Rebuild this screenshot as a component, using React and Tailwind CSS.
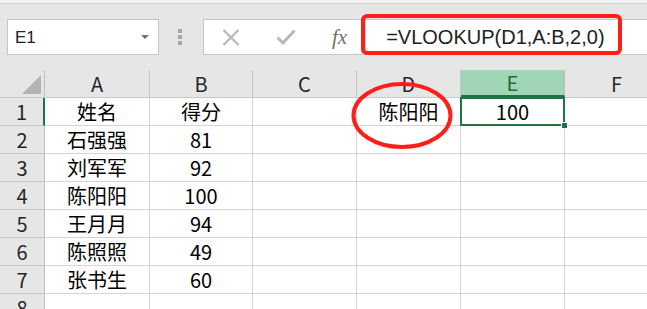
import React from 'react';

const cols = [
  { key: 'A', w: 'w-[105px]' },
  { key: 'B', w: 'w-[103px]' },
  { key: 'C', w: 'w-[104px]' },
  { key: 'D', w: 'w-[104px]' },
  { key: 'E', w: 'w-[104px]' },
  { key: 'F', w: 'w-[104px]' },
];

const rows = [
  { A: '姓名', B: '得分', D: '陈阳阳', E: '100' },
  { A: '石强强', B: '81' },
  { A: '刘军军', B: '92' },
  { A: '陈阳阳', B: '100' },
  { A: '王月月', B: '94' },
  { A: '陈照照', B: '49' },
  { A: '张书生', B: '60' },
  {},
];

const cellFont = { fontFamily: '"Noto Sans CJK SC", "Liberation Sans", sans-serif' };
const latin = { fontFamily: '"Liberation Sans", sans-serif' };

export default function App() {
  return (
    <div className="relative w-[647px] h-[309px] overflow-hidden bg-white" style={cellFont}>
      {/* top strip */}
      <div className="h-[4px] bg-[#f2f2f2] border-b border-[#d6d6d6]" />

      {/* name box + formula bar */}
      <div className="h-[66px] bg-[#e6e6e6] flex items-start pt-[15px]">
        <div className="ml-[7px] w-[152px] h-[36px] bg-white border border-[#c6c6c6] flex items-center pl-[7px] pr-[9px]">
          <span className="flex-1 text-[17px] leading-none text-[#222]" style={latin}>E1</span>
          <span className="w-0 h-0 border-l-[4px] border-r-[4px] border-t-[4px] border-l-transparent border-r-transparent border-t-[#707070]" />
        </div>

        <div className="ml-[19px] mt-[10px] flex flex-col gap-[2px]">
          <span className="w-[4px] h-[4px] bg-[#a8a8a8]" />
          <span className="w-[4px] h-[4px] bg-[#a8a8a8]" />
          <span className="w-[4px] h-[4px] bg-[#a8a8a8]" />
        </div>

        <div className="ml-[21px] flex-1 h-[36px] bg-white border border-r-0 border-[#c6c6c6] flex items-center">
          <svg className="ml-[18px]" width="18" height="17" viewBox="0 0 18 17">
            <path d="M1.5 1 L16.5 16 M16.5 1 L1.5 16" stroke="#b8b8b8" strokeWidth="2.2" fill="none" />
          </svg>
          <svg className="ml-[36px]" width="20" height="16" viewBox="0 0 20 16">
            <path d="M1.5 8.5 L7 14 L18.5 1.5" stroke="#b8b8b8" strokeWidth="3" fill="none" />
          </svg>
          <span
            className="ml-[36px] text-[21px] italic leading-none text-[#707070]"
            style={{ fontFamily: '"Liberation Serif", serif' }}
          >
            fx
          </span>
          <div className="ml-[14px] w-[5px] h-full bg-[#ececec] border-l border-r border-[#cfcfcf]" />
          <span className="ml-[20px] text-[20px] leading-none text-[#222]" style={latin}>
            =VLOOKUP(D1,A:B,2,0)
          </span>
        </div>
      </div>

      {/* column headers */}
      <div className="flex h-[28px] bg-[#e6e6e6] border-b border-[#c8c8c8]">
        <div className="w-[45px] shrink-0 border-r border-[#c0c0c0] flex items-end justify-end pr-[3px] pb-[3px]">
          <div className="w-[19px] h-[19px] bg-[#b4b4b4] [clip-path:polygon(100%_0,100%_100%,0_100%)]" />
        </div>
        {cols.map((c) => (
          <div
            key={c.key}
            className={`${c.w} shrink-0 flex items-center justify-center text-[20px] leading-none border-r ${
              c.key === 'E'
                ? 'bg-[#a0d6b5] text-[#1e6b41] border-[#bcbcbc] border-b-2 border-b-[#217346]'
                : 'text-[#262626] border-[#c8c8c8]'
            }`}
          >
            {c.key}
          </div>
        ))}
      </div>

      {/* rows */}
      {rows.map((r, i) => (
        <div key={i} className="flex h-[28px]">
          <div
            className={`w-[45px] shrink-0 flex items-center justify-center bg-[#e6e6e6] text-[20px] leading-none text-[#262626] border-b border-[#c8c8c8] ${
              i === 0 ? 'border-r-2 border-r-[#217346]' : 'border-r border-r-[#c0c0c0]'
            }`}
          >
            {i + 1}
          </div>
          {cols.map((c) => (
            <div
              key={c.key}
              className={`${c.w} shrink-0 relative flex items-center justify-center text-[20px] leading-none text-black border-r border-b border-[#d4d4d4]`}
            >
              {r[c.key]}
              {i === 0 && c.key === 'E' && (
                <>
                  <div className="absolute z-10 -left-[1px] -top-[1px] -right-[1px] -bottom-[1px] border-2 border-[#217346]" />
                  <div className="absolute z-10 -right-[4px] -bottom-[4px] w-[7px] h-[7px] bg-[#217346] border border-white" />
                </>
              )}
            </div>
          ))}
        </div>
      ))}

      {/* red annotations */}
      <div className="absolute z-20 left-[361px] top-[14px] w-[261px] h-[41px] border-4 border-[#ff1f1a] rounded-[6px]" />
      <svg className="absolute z-20 left-[351px] top-[81px]" width="104" height="70" viewBox="0 0 104 70">
        <ellipse cx="51" cy="34.5" rx="48.5" ry="31.5" fill="none" stroke="#ff1f1a" strokeWidth="4" />
      </svg>
    </div>
  );
}
